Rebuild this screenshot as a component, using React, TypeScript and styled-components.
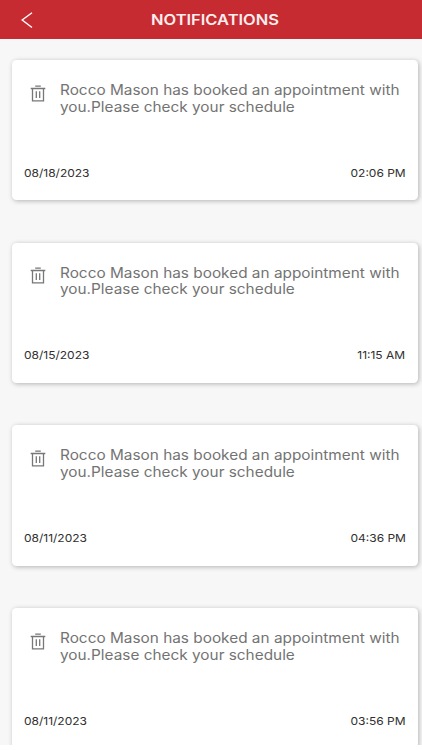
import React from "react";
import styled, { createGlobalStyle } from "styled-components";

const Global = createGlobalStyle`
  * { box-sizing: border-box; }
  body { margin: 0; background: #fff; font-family: Inter, "Liberation Sans", sans-serif; overflow: hidden; }
`;
const Screen = styled.div`height: 750px; display: flex; flex-direction: column; overflow: hidden;`;
const Header = styled.header`
  height: 39px; flex: none; background: #c62b32; color: #fff;
  display: grid; grid-template-columns: 54px 1fr 46px; align-items: center;
`;
const Back = styled.button`
  border: 0; background: none; padding: 0; height: 39px; display: flex; align-items: center; justify-content: center;
  svg { display: block; }
`;
const Title = styled.h1`
  margin: 0; font-size: 14.6px; font-weight: 600; color: #fdeeee; text-align: center; white-space: nowrap;
  transform: scaleX(1.13);
`;
const List = styled.main`
  height: 706px; flex: none; background: #f7f7f7; overflow: hidden;
  padding: 21px 4px 0 12px; display: flex; flex-direction: column; gap: 42.4px;
`;
const Card = styled.article`
  height: 140.3px; flex: none; background: #fff; border-radius: 4.5px;
  box-shadow: 1px 1px 5px rgba(0,0,0,.28); padding: 22px 12.5px 19.5px 12px;
  display: flex; flex-direction: column; justify-content: space-between;
`;
const Body = styled.div`display: flex; svg { margin: 2.5px 13.6px 0 6px; flex: none; }`;
const Message = styled.p`
  margin: 0; font-size: 14px; line-height: 16.8px; color: #737373; white-space: nowrap;
  transform: scaleX(1.097); transform-origin: left;
`;
const Meta = styled.footer`display: flex; justify-content: space-between; font-size: 10.8px; line-height: 15px; color: #303030;`;
const Stamp = styled.time<{ $side: "left" | "right" }>`
  transform: scaleX(1.11); transform-origin: ${(p) => p.$side};
`;

const Trash = () => (
  <svg width="16" height="18" viewBox="0 0 16 18" fill="none" stroke="#777" strokeWidth="1.3">
    <path d="M0.7 3.5H15.3M5.2 1.2H10.8M2.5 3.5V15.9H13.5V3.5M6.3 6.3V13.1M9.7 6.3V13.1" />
  </svg>
);

const items = [
  ["08/18/2023", "02:06 PM"],
  ["08/15/2023", "11:15 AM"],
  ["08/11/2023", "04:36 PM"],
  ["08/11/2023", "03:56 PM"],
];

export default function App() {
  return (
    <Screen>
      <Global />
      <Header>
        <Back aria-label="Back">
          <svg width="12" height="18" viewBox="0 0 12 18" fill="none" stroke="#fff" strokeWidth="1.4"><path d="M11 1.8L1.2 9L11 16.5" /></svg>
        </Back>
        <Title>NOTIFICATIONS</Title>
      </Header>
      <List>
        {items.map(([date, time], i) => (
          <Card key={i}>
            <Body>
              <Trash />
              <Message>Rocco Mason has booked an appointment with<br />you.Please check your schedule</Message>
            </Body>
            <Meta><Stamp $side="left">{date}</Stamp><Stamp $side="right">{time}</Stamp></Meta>
          </Card>
        ))}
      </List>
    </Screen>
  );
}
